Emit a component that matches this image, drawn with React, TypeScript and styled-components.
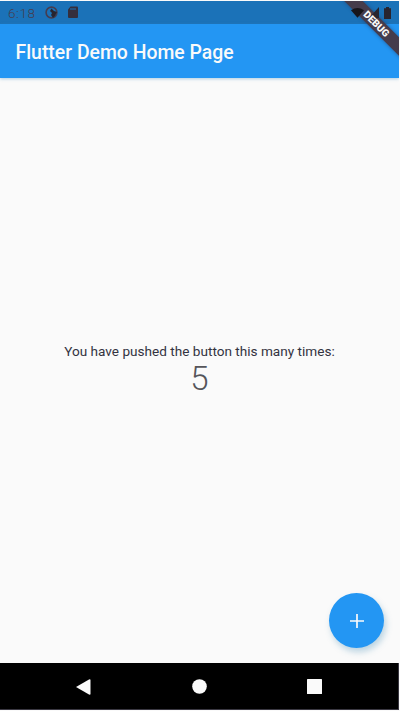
import React, { useState } from "react";
import styled, { createGlobalStyle } from "styled-components";

const GlobalStyle = createGlobalStyle`
  * { box-sizing: border-box; }
  html, body { margin: 0; background: #fafafa; overflow: hidden; }
  body { font-family: Roboto, "Noto Sans", sans-serif; }
`;

const Device = styled.div`
  position: relative;
  width: 399px;
  height: 709px;
  margin-top: 1px;
  display: flex;
  flex-direction: column;
  overflow: hidden;
  background: #fafafa;
`;

const StatusBar = styled.div`
  height: 23px;
  flex: none;
  display: flex;
  align-items: center;
  justify-content: space-between;
  padding: 0 8px;
  background: #1b72b8;
  color: #453d50;
`;

const StatusGroup = styled.div<{ $gap: number }>`
  display: flex;
  align-items: center;
  gap: ${(p) => p.$gap}px;
`;

const Clock = styled.span`
  width: 28px;
  font-size: 13.5px;
  font-weight: 300;
  letter-spacing: 0.6px;
  white-space: nowrap;
`;

const AppBar = styled.header`
  height: 54px;
  flex: none;
  display: flex;
  align-items: center;
  padding: 4px 16px 0 15.5px;
  background: #2396f3;
  box-shadow: 0 1px 3px rgba(60, 140, 190, 0.4);
`;

const Title = styled.h1`
  margin: 0;
  font-size: 19.4px;
  line-height: 24px;
  font-weight: 500;
  color: #fafafa;
  white-space: nowrap;
`;

const Body = styled.main`
  flex: 1;
  position: relative;
  display: flex;
  flex-direction: column;
  align-items: center;
  justify-content: center;
`;

const Message = styled.p`
  margin: 0;
  font-size: 13.6px;
  line-height: 16px;
  color: #33333f;
  white-space: nowrap;
`;

const Count = styled.p`
  margin: 0;
  padding-top: 1px;
  font-size: 33px;
  line-height: 38px;
  font-weight: 300;
  color: #55555a;
`;

const Fab = styled.button`
  position: absolute;
  right: 15px;
  bottom: 15px;
  width: 55px;
  height: 55px;
  padding: 0;
  border: 0;
  border-radius: 50%;
  display: grid;
  place-items: center;
  background: #2396f3;
  box-shadow: 2px 4px 6px rgba(70, 140, 180, 0.35);
`;

const NavBar = styled.nav`
  height: 47px;
  flex: none;
  display: flex;
  align-items: center;
  justify-content: space-between;
  padding: 0 77px 0 76px;
  background: #000;
  box-shadow: inset -1px -1px 0 #3a3842;
`;

const Banner = styled.div`
  position: absolute;
  top: 15px;
  right: -26px;
  width: 100px;
  height: 13px;
  transform: rotate(45deg);
  background: #453c4c;
  box-shadow: 0 0 4px rgba(40, 50, 90, 0.6);
  color: #fafafa;
  font-size: 10px;
  line-height: 13px;
  font-weight: 900;
  text-align: center;
`;

const SystemIcons = styled(StatusGroup)`
  position: relative;
  z-index: 1;
`;

const BannerLabel = styled(Banner)`
  z-index: 2;
  padding-left: 4px;
  background: none;
  box-shadow: none;
`;

const Icon = styled.svg`
  display: block;
  flex: none;
`;

export default function App() {
  const [count, setCount] = useState(5);
  return (
    <>
      <GlobalStyle />
      <Device>
        <StatusBar>
          <StatusGroup $gap={9}>
            <Clock>6:18</Clock>
            <Icon width="13" height="13" viewBox="0 0 13 13">
              <circle cx="6.5" cy="6.5" r="5.4" fill="none" stroke="#453d50" strokeWidth="1.6" />
              <path d="M6.5 2.5 9 5l3 1-2 4-2 2-2-3 1-2-2-2z" fill="#28242f" />
            </Icon>
            <Icon width="11" height="13" viewBox="0 0 11 13">
              <path d="M3.5 0.5H10a1 1 0 0 1 1 1V11a1 1 0 0 1-1 1H2a1 1 0 0 1-1-1V3.5z" fill="#352f3d" />
              <path d="M4 2v2M6 2v2M8 2v2" stroke="#1b72b8" />
            </Icon>
          </StatusGroup>
          <SystemIcons $gap={5}>
            <Icon width="13" height="12" viewBox="0 0 14 12">
              <path d="M0 3Q7-2 14 3L7 11z" fill="#17151b" />
            </Icon>
            <Icon width="10" height="11" viewBox="0 0 10 11">
              <path d="M10 0v11H0z" fill="#28242f" />
            </Icon>
            <Icon width="7" height="12" viewBox="0 0 7 12">
              <path d="M2 0h3v1.3h2V12H0V1.3h2z" fill="#28242f" />
            </Icon>
          </SystemIcons>
        </StatusBar>
        <AppBar>
          <Title>Flutter Demo Home Page</Title>
        </AppBar>
        <Body>
          <Message>You have pushed the button this many times:</Message>
          <Count>{count}</Count>
          <Fab aria-label="Increment" onClick={() => setCount(count + 1)}>
            <Icon width="14" height="14" viewBox="0 0 14 14">
              <path d="M7 0v14M0 7h14" stroke="#fafafa" strokeWidth="1.7" />
            </Icon>
          </Fab>
        </Body>
        <NavBar>
          <Icon width="15" height="16" viewBox="0 0 15 16">
            <path d="M0 8 13 0.4Q14.5 0 14.5 1v14q0 1-1.5 0.6z" fill="#fafafa" />
          </Icon>
          <Icon width="15" height="15" viewBox="0 0 15 15">
            <circle cx="7.5" cy="7.5" r="7.3" fill="#fafafa" />
          </Icon>
          <Icon width="15" height="15" viewBox="0 0 15 15">
            <rect width="15" height="15" rx="0.5" fill="#fafafa" />
          </Icon>
        </NavBar>
        <Banner />
        <BannerLabel>DEBUG</BannerLabel>
      </Device>
    </>
  );
}
